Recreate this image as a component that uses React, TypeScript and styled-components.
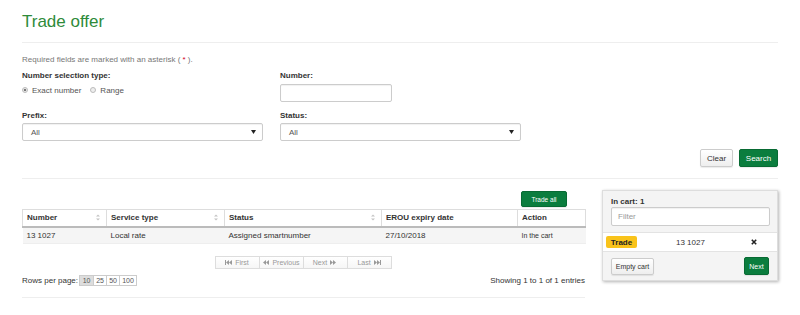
import React from "react";
import styled, { createGlobalStyle } from "styled-components";

const GREEN = "#0b7d3e";

const Global = createGlobalStyle`
  html, body { margin: 0; padding: 0; background: #fff; }
  body {
    font-family: "Liberation Sans", Arial, sans-serif;
    font-size: 8px;
    color: #333;
  }
  * { box-sizing: border-box; }
`;

const Page = styled.div`
  width: 800px;
  padding: 12px 22px 0 22px;
`;

const Title = styled.h1`
  margin: 0;
  font-size: 17px;
  line-height: 19px;
  font-weight: normal;
  color: #2e8b3a;
`;

const Rule = styled.div<{ $top: number; $width?: number }>`
  margin-top: ${(p) => p.$top}px;
  height: 0;
  border-top: 1px solid #eee;
  width: ${(p) => (p.$width ? `${p.$width}px` : "100%")};
`;

const Hint = styled.div`
  margin-top: 12px;
  line-height: 10px;
  color: #777;
`;

const Star = styled.span`
  color: #d0021b;
`;

const FormGrid = styled.div`
  display: grid;
  grid-template-columns: 241px 241px;
  column-gap: 17px;
  row-gap: 8px;
  margin-top: 5px;
`;

const Field = styled.div`
  display: flex;
  flex-direction: column;
`;

const Label = styled.div<{ $gap?: number }>`
  font-weight: bold;
  line-height: 10px;
  margin-bottom: ${(p) => p.$gap ?? 3}px;
  margin-top: 1px;
`;

const Radios = styled.div`
  display: flex;
  align-items: center;
  height: 10px;
  color: #555;
`;

const RadioItem = styled.label`
  display: flex;
  align-items: center;
  margin-right: 9px;
`;

const RadioDot = styled.span<{ $on?: boolean }>`
  width: 6px;
  height: 6px;
  border-radius: 50%;
  border: 1px solid #bbb;
  background: ${(p) => (p.$on ? "radial-gradient(circle, #777 0 1.3px, #eee 1.6px)" : "#eee")};
  margin-right: 4px;
`;

const TextInput = styled.div<{ $w: number; $h: number }>`
  width: ${(p) => p.$w}px;
  height: ${(p) => p.$h}px;
  background: #fff;
  border: 1px solid #ccc;
  border-radius: 2px;
  box-shadow: inset 0 1px 1px rgba(0, 0, 0, 0.06);
  display: flex;
  align-items: center;
  padding-left: 6px;
  color: #999;
`;

const Select = styled.div`
  height: 18px;
  width: 100%;
  background: #fff;
  border: 1px solid #ccc;
  border-radius: 2px;
  box-shadow: inset 0 1px 1px rgba(0, 0, 0, 0.06);
  display: flex;
  align-items: center;
  justify-content: space-between;
  padding: 0 6px 0 8px;
  color: #555;
`;

const Actions = styled.div`
  display: flex;
  justify-content: flex-end;
  gap: 6px;
  margin-top: 8px;
`;

const Btn = styled.button<{ $primary?: boolean; $w: number; $h: number; $fs?: number }>`
  width: ${(p) => p.$w}px;
  height: ${(p) => p.$h}px;
  padding: 0;
  font-family: "Liberation Sans", Arial, sans-serif;
  font-size: ${(p) => p.$fs ?? 8}px;
  border-radius: 2px;
  cursor: pointer;
  border: 1px solid ${(p) => (p.$primary ? "#086a33" : "#ccc")};
  color: ${(p) => (p.$primary ? "#fff" : "#333")};
  background: ${(p) => (p.$primary ? GREEN : "linear-gradient(#fff, #eee)")};
  box-shadow: 0 1px 1px rgba(0, 0, 0, 0.08);
`;

const Bottom = styled.div`
  display: flex;
  gap: 17px;
`;

const LeftCol = styled.div`
  width: 563px;
  display: flex;
  flex-direction: column;
`;

const Toolbar = styled.div`
  display: flex;
  justify-content: flex-end;
  padding-right: 18px;
  margin-top: 12px;
`;

const Table = styled.table`
  margin-top: 2px;
  width: 563px;
  border-collapse: collapse;
  table-layout: fixed;
`;

const Th = styled.th<{ $w: number }>`
  width: ${(p) => p.$w}px;
  height: 17px;
  padding: 0 6px 0 4px;
  text-align: left;
  font-weight: bold;
  border: 1px solid #ddd;
  border-bottom: 2px solid #bbb;
`;

const ThInner = styled.div`
  display: flex;
  align-items: center;
  justify-content: space-between;
`;

const Td = styled.td<{ $fs?: number }>`
  height: 17px;
  padding: 0 4px;
  background: #f5f5f5;
  font-size: ${(p) => p.$fs ?? 8}px;
  border-bottom: 1px solid #eee;
`;

const Pager = styled.div`
  display: flex;
  justify-content: center;
  margin-top: 12px;
`;

const PageBtn = styled.div`
  width: 45px;
  height: 13px;
  border: 1px solid #ddd;
  margin-left: -1px;
  background: linear-gradient(#fff, #f6f6f6);
  color: #999;
  font-size: 7px;
  display: flex;
  align-items: center;
  justify-content: center;
  gap: 3px;
`;

const Footer = styled.div`
  display: flex;
  justify-content: space-between;
  align-items: center;
  margin-top: 6px;
  height: 11px;
`;

const Rows = styled.div`
  display: flex;
  align-items: center;
  gap: 2px;
`;

const SizeGroup = styled.div`
  display: flex;
`;

const SizeBtn = styled.div<{ $on?: boolean; $w: number }>`
  width: ${(p) => p.$w}px;
  height: 11px;
  border: 1px solid #ccc;
  margin-left: -1px;
  font-size: 7px;
  display: flex;
  align-items: center;
  justify-content: center;
  background: ${(p) => (p.$on ? "#ddd" : "#fff")};
  color: #555;
`;

const Cart = styled.div`
  margin-top: 11px;
  width: 176px;
  height: 91px;
  background: #f4f4f4;
  border: 1px solid #ddd;
  box-shadow: 1px 1px 3px rgba(0, 0, 0, 0.3);
  display: flex;
  flex-direction: column;
`;

const CartHead = styled.div`
  padding: 6px 8px 0 8px;
`;

const CartTitle = styled.div`
  font-weight: bold;
  line-height: 10px;
`;

const CartRow = styled.div`
  margin-top: 6px;
  height: 20px;
  background: #fff;
  border-top: 1px solid #e3e3e3;
  border-bottom: 1px solid #e3e3e3;
  display: grid;
  grid-template-columns: 70px 1fr auto;
  align-items: center;
  padding: 0 20px 0 3px;
`;

const Badge = styled.span`
  width: 31px;
  height: 12px;
  background: #f9c31a;
  border-radius: 2px;
  color: #222;
  font-weight: bold;
  display: flex;
  align-items: center;
  justify-content: center;
`;

const CartFoot = styled.div`
  display: flex;
  justify-content: space-between;
  align-items: center;
  padding: 5px 8px 0 8px;
`;

const SortIcon = () => (
  <svg width="4" height="7" viewBox="0 0 4 7">
    <polygon points="0,2.5 2,0.5 4,2.5" fill="#c4c4c4" />
    <polygon points="0,4.5 2,6.5 4,4.5" fill="#c4c4c4" />
  </svg>
);

const Caret = () => (
  <svg width="5" height="4" viewBox="0 0 5 4">
    <polygon points="0,0 5,0 2.5,4" fill="#222" />
  </svg>
);

const NavIcon = ({ dir, bar }: { dir: "l" | "r"; bar?: boolean }) => (
  <svg width="7" height="5" viewBox="0 0 7 5">
    {dir === "l" ? (
      <>
        {bar && <rect x="0" y="0" width="1" height="5" fill="#999" />}
        <polygon points="1,2.5 4,0 4,5" fill="#999" />
        <polygon points="4,2.5 7,0 7,5" fill="#999" />
      </>
    ) : (
      <>
        <polygon points="0,0 3,2.5 0,5" fill="#999" />
        <polygon points="3,0 6,2.5 3,5" fill="#999" />
        {bar && <rect x="6" y="0" width="1" height="5" fill="#999" />}
      </>
    )}
  </svg>
);

const Cross = () => (
  <svg width="6" height="6" viewBox="0 0 6 6">
    <path d="M0.8 0.8 L5.2 5.2 M5.2 0.8 L0.8 5.2" stroke="#222" strokeWidth="1.6" />
  </svg>
);

const columns = [
  { name: "Number", w: 84, sort: true },
  { name: "Service type", w: 118, sort: true },
  { name: "Status", w: 157, sort: true },
  { name: "EROU expiry date", w: 136, sort: false },
  { name: "Action", w: 68, sort: false },
];

export default function App() {
  return (
    <Page>
      <Global />
      <Title>Trade offer</Title>
      <Rule $top={11} />
      <Hint>
        Required fields are marked with an asterisk ( <Star>*</Star> ).
      </Hint>
      <FormGrid>
        <Field>
          <Label $gap={4}>Number selection type:</Label>
          <Radios>
            <RadioItem>
              <RadioDot $on />
              Exact number
            </RadioItem>
            <RadioItem>
              <RadioDot />
              Range
            </RadioItem>
          </Radios>
        </Field>
        <Field>
          <Label $gap={3}>Number:</Label>
          <TextInput $w={112} $h={18} />
        </Field>
        <Field>
          <Label $gap={2}>Prefix:</Label>
          <Select>
            All
            <Caret />
          </Select>
        </Field>
        <Field>
          <Label $gap={2}>Status:</Label>
          <Select>
            All
            <Caret />
          </Select>
        </Field>
      </FormGrid>
      <Actions>
        <Btn $w={33} $h={18}>Clear</Btn>
        <Btn $primary $w={39} $h={18}>Search</Btn>
      </Actions>
      <Rule $top={11} />
      <Bottom>
        <LeftCol>
          <Toolbar>
            <Btn $primary $w={46} $h={16} $fs={6.5}>
              Trade all
            </Btn>
          </Toolbar>
          <Table>
            <thead>
              <tr>
                {columns.map((c) => (
                  <Th key={c.name} $w={c.w}>
                    <ThInner>
                      {c.name}
                      {c.sort && <SortIcon />}
                    </ThInner>
                  </Th>
                ))}
              </tr>
            </thead>
            <tbody>
              <tr>
                <Td>13 1027</Td>
                <Td>Local rate</Td>
                <Td>Assigned smartnumber</Td>
                <Td>27/10/2018</Td>
                <Td $fs={7}>In the cart</Td>
              </tr>
            </tbody>
          </Table>
          <Pager>
            <PageBtn>
              <NavIcon dir="l" bar /> First
            </PageBtn>
            <PageBtn>
              <NavIcon dir="l" /> Previous
            </PageBtn>
            <PageBtn>
              Next <NavIcon dir="r" />
            </PageBtn>
            <PageBtn>
              Last <NavIcon dir="r" bar />
            </PageBtn>
          </Pager>
          <Footer>
            <Rows>
              Rows per page:
              <SizeGroup>
                <SizeBtn $on $w={15}>10</SizeBtn>
                <SizeBtn $w={14}>25</SizeBtn>
                <SizeBtn $w={14}>50</SizeBtn>
                <SizeBtn $w={18}>100</SizeBtn>
              </SizeGroup>
            </Rows>
            <span>Showing 1 to 1 of 1 entries</span>
          </Footer>
          <Rule $top={11} />
        </LeftCol>
        <Cart>
          <CartHead>
            <CartTitle>In cart: 1</CartTitle>
            <TextInput $w={159} $h={19}>Filter</TextInput>
          </CartHead>
          <CartRow>
            <Badge>Trade</Badge>
            <span>13 1027</span>
            <Cross />
          </CartRow>
          <CartFoot>
            <Btn $w={43} $h={17} $fs={7}>Empty cart</Btn>
            <Btn $primary $w={25} $h={18} $fs={7}>Next</Btn>
          </CartFoot>
        </Cart>
      </Bottom>
    </Page>
  );
}
